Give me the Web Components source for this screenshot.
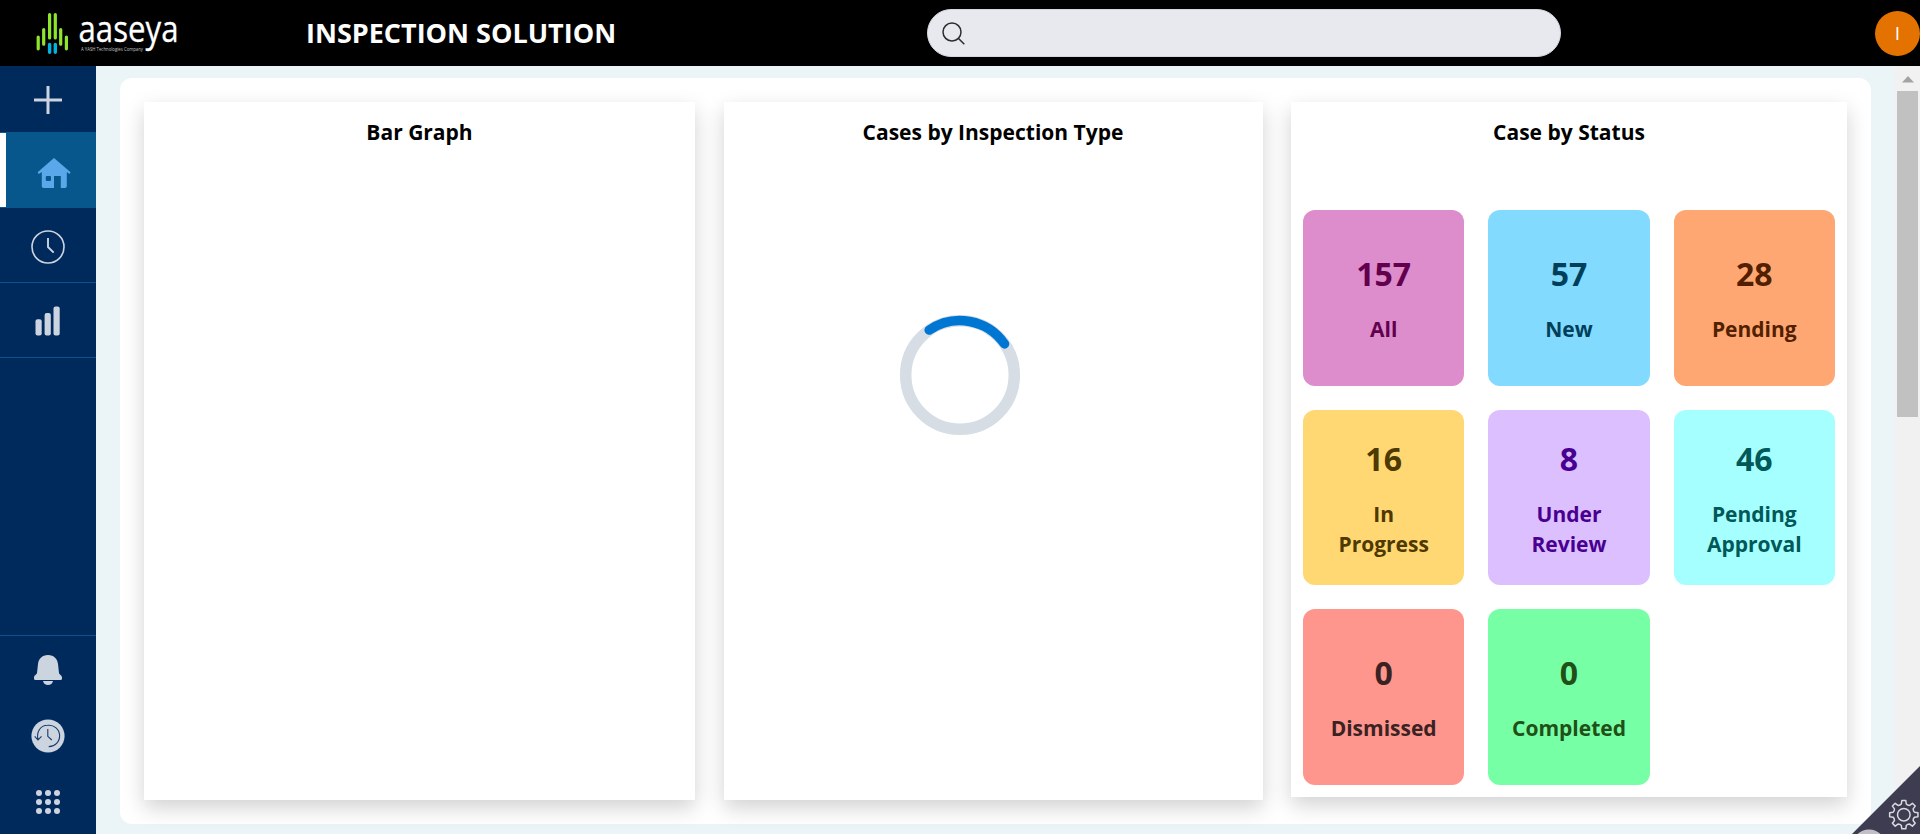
<!DOCTYPE html>
<html lang="en">
<head>
<meta charset="utf-8">
<title>Inspection Solution</title>
<style>
html,body{margin:0;height:100%;overflow:hidden;background:#ebf4f7;font-family:"Open Sans","Noto Sans",sans-serif}
</style>
</head>
<body>
<inspection-app></inspection-app>
<script>
const define=(name,html)=>customElements.define(name,class extends HTMLElement{
  constructor(){
    super();
    const t=document.createElement('template');
    t.innerHTML=html;
    this.attachShadow({mode:'open'}).append(t.content.cloneNode(true));
  }
});

define('brand-logo',`
<style>:host{display:block;width:192px;height:66px;flex:none}svg{display:block;overflow:visible}</style>
<svg width="192" height="66" viewBox="0 0 192 66">
  <g stroke="#8fe52c" stroke-width="3.2" stroke-linecap="round">
    <path d="M38.2 37V48.8M43.7 29.6V44.2M49.6 14.6V38M55.3 14.6V38M60.7 29.6V44.2M66.4 37V48.8"/>
  </g>
  <path d="M49.6 44.5V52.3M55.3 44.5V52.3" stroke="#00b4e0" stroke-width="3.4" stroke-linecap="round"/>
  <text x="78.500" y="41.8" font-family="Open Sans" font-size="36" fill="#fff" stroke="#fff" stroke-width=".3" textLength="100" lengthAdjust="spacingAndGlyphs">aaseya</text>
  <text x="81" y="51" font-family="Open Sans" font-size="5" fill="#c4c4c4" textLength="62" lengthAdjust="spacingAndGlyphs">A YASH Technologies Company</text>
</svg>`);

define('search-box',`
<style>:host{display:flex;align-items:center;box-sizing:border-box;width:634px;height:48px;border-radius:24px;background:#e8e9ef;border:1px solid #d5d7e0;padding-left:13px}</style>
<svg width="26" height="26" viewBox="0 0 26 26" fill="none" stroke="#2b2b33" stroke-width="1.5"><circle cx="11" cy="12" r="9"/><path d="M17.3 18.3 23.3 24.3"/></svg>`);

define('user-avatar',`
<style>:host{display:flex;align-items:center;justify-content:center;width:45px;height:45px;border-radius:50%;background:#e37200;color:#fff;font-size:19px;line-height:45px}</style>
<slot></slot>`);

define('app-header',`
<style>
:host{display:flex;align-items:center;height:66px;background:#000;color:#fff}
h1{margin:0 0 0 114px;width:621px;font-size:27px;line-height:36px;font-weight:700;white-space:nowrap}
user-avatar{margin-left:auto;margin-top:1px}
</style>
<brand-logo></brand-logo><h1>INSPECTION SOLUTION</h1><search-box></search-box><user-avatar>I</user-avatar>`);

define('nav-item',`
<style>
:host{display:flex;box-sizing:border-box;align-items:center;justify-content:center;height:75px;border-bottom:1px solid #08558b;color:#ccd4e0}
:host([plain]){height:66px;border:0}
:host([active]){height:76px;border:0;background:linear-gradient(#fff,#fff) 0 1px/6px 74px no-repeat #08578c;padding-left:12px;color:#5aa7ea}
</style><slot></slot>`);

define('side-nav',`
<style>
:host{display:flex;flex-direction:column;width:96px;background:#002a5c;flex:none}
svg{display:block;flex:none}
.bottom{margin-top:auto;border-top:1px solid #08558b}
</style>
<nav-item plain style="padding-top:2px"><svg width="28" height="28" viewBox="0 0 28 28" fill="none" stroke="currentColor" stroke-width="3"><path d="M14 0V28M0 14H28"/></svg></nav-item>
<nav-item active><svg style="margin-top:5px" width="34" height="32" viewBox="0 0 34 32"><path fill="currentColor" fill-rule="evenodd" d="M17 1 33.6 15.3 32.4 17 29.8 15V29.2Q29.8 31 28 31H23.8V19H17V31H6.7Q4.8 31 4.8 29.2V15L1.8 17 .6 15.3ZM9.8 19Q8.8 19 8.8 20V23Q8.8 24 9.8 24H13Q14 24 14 23V20Q14 19 13 19Z"/></svg></nav-item>
<nav-item style="padding-top:3px"><svg width="34" height="34" viewBox="0 0 34 34" fill="none" stroke="currentColor" stroke-width="1.6"><circle cx="17" cy="17" r="16"/><path d="M17 8V17L22.7 22.7" stroke-width="1.9"/></svg></nav-item>
<nav-item style="padding-top:2px"><svg width="26" height="30" viewBox="0 0 26 30" fill="currentColor"><rect x=".5" y="13.3" width="6.2" height="16.2" rx="2"/><rect x="9.6" y="7" width="6.2" height="22.5" rx="2"/><rect x="18.500" y=".6" width="6.2" height="28.9" rx="2"/></svg></nav-item>
<div class="bottom">
<nav-item plain><svg style="margin-top:1px" width="28" height="30" viewBox="0 0 28 30" fill="currentColor"><path d="M14 0C20 0 23.5 4 24 9L25 18C25.2 19.6 28 20 28 22.5V23.5Q28 25 26.5 25H1.5Q0 25 0 23.5V22.5C0 20 2.8 19.6 3 18L4 9C4.500 4 8 0 14 0ZM9 26H19C18.500 28.600 16.500 30 14 30S9.500 28.600 9 26Z"/></svg></nav-item>
<nav-item plain style="padding-top:2px"><svg width="34" height="34" viewBox="0 0 34 34" fill="none"><circle cx="17" cy="17" r="16.600" fill="currentColor"/><path d="M3.700 17.300 7 21 10.500 17.300M7 20.500C5.300 13.500 9 6.300 16.500 6.300A10.700 10.700 0 1 1 17.700 27.600M16.800 10V17.300L20.800 21" stroke="#153a69" stroke-width="1.100"/></svg></nav-item>
<nav-item plain style="padding-top:2px"><svg width="24" height="24" viewBox="0 0 24 24" fill="currentColor"><g id="r"><circle cx="3" cy="3" r="3"/><circle cx="12" cy="3" r="3"/><circle cx="21" cy="3" r="3"/></g><use href="#r" y="9"/><use href="#r" y="18"/></svg></nav-item>
</div>`);

define('dash-panel',`
<style>
:host{display:flex;flex-direction:column;box-sizing:border-box;background:#fff;box-shadow:0 8px 20px rgba(0,0,0,.18)}
h2{margin:15px 0 0;font-size:21px;line-height:30px;font-weight:700;color:#000;text-align:center}
</style><h2><slot name="title"></slot></h2><slot></slot>`);

define('status-tile',`
<style>
:host{display:flex;flex-direction:column;align-items:center;justify-content:center;border-radius:12px;text-align:center;font-weight:700;font-size:21px;line-height:30px;gap:18px}
b{font-size:32px;line-height:44px;font-weight:700}
.label{padding:0 20px}
</style><b><slot name="count"></slot></b><div class="label"><slot></slot></div>`);

define('status-grid',`
<style>
:host{display:grid;grid-template-columns:repeat(3,1fr);grid-template-rows:176px 175px 176px;column-gap:24px;row-gap:24px;margin:63px 12px 0}
</style><slot></slot>`);

define('loading-ring',`
<style>:host{display:block;position:absolute;left:899px;top:314px;width:122px;height:122px}svg{display:block}</style>
<svg width="122" height="122" viewBox="0 0 122 122" fill="none"><circle cx="61" cy="61" r="54.300" stroke="#d6dde5" stroke-width="11.500"/><path d="M30.200 16.100A54.300 54.300 0 0 1 105.500 29.900" stroke="#0076d3" stroke-width="9.500" stroke-linecap="round"/></svg>`);

define('scroll-track',`
<style>:host{display:flex;flex-direction:column;align-items:center;width:25px;background:#f1f1f1;flex:none}
i{display:block;width:21px;height:326px;background:#c1c1c1;margin-top:8.500px}
svg{display:block;margin-top:10px}</style>
<svg width="12" height="6.500" viewBox="0 0 12 6.500"><path d="M0 6.500 6 0 12 6.500Z" fill="#a3a3a3"/></svg><i></i>`);

define('corner-tools',`
<style>:host{display:block;position:absolute;right:0;bottom:0;width:68px;height:68px}svg{display:block}</style>
<svg width="68" height="68" viewBox="0 0 68 68"><path d="M68 0V68H0Z" fill="#3d3c50"/><circle cx="17" cy="80.500" r="17" fill="#c4bfc6"/>
<g transform="translate(51.800 48.700)" fill="none" stroke="#d9d9df" stroke-width="1.500" stroke-linejoin="round"><circle r="6.300"/><path id="gear"/></g></svg>`);

define('inspection-app',`
<style>
:host{display:flex;flex-direction:column;height:100vh;position:relative;overflow:hidden}
.body{display:flex;flex:1;min-height:0}
main{flex:1;padding:12px 24px 10px}
.sheet{display:grid;grid-template-columns:551px 539px 556px;column-gap:28.500px;box-sizing:border-box;height:746px;background:#fff;border-radius:12px;padding:24px}
dash-panel{height:698px}
dash-panel:last-child{height:695px}
</style>
<app-header></app-header>
<div class="body">
<side-nav></side-nav>
<main><div class="sheet">
<dash-panel><span slot="title">Bar Graph</span></dash-panel>
<dash-panel><span slot="title">Cases by Inspection Type</span></dash-panel>
<dash-panel><span slot="title">Case by Status</span>
<status-grid>
<status-tile style="background:#dd8dcb;color:#62004e"><span slot="count">157</span>All</status-tile>
<status-tile style="background:#82daff;color:#003f5a"><span slot="count">57</span>New</status-tile>
<status-tile style="background:#ffa772;color:#521f00"><span slot="count">28</span>Pending</status-tile>
<status-tile style="background:#ffd773;color:#4e3900"><span slot="count">16</span>In<br>Progress</status-tile>
<status-tile style="background:#dcbfff;color:#480090"><span slot="count">8</span>Under Review</status-tile>
<status-tile style="background:#a5ffff;color:#005858"><span slot="count">46</span>Pending Approval</status-tile>
<status-tile style="background:#ff968d;color:#3a2222"><span slot="count">0</span>Dismissed</status-tile>
<status-tile style="background:#77ffa5;color:#205018"><span slot="count">0</span>Completed</status-tile>
</status-grid></dash-panel>
</div></main>
<scroll-track></scroll-track>
</div>
<loading-ring></loading-ring>
<corner-tools></corner-tools>`);

// Eight rounded teeth around the settings hub.
const tools=document.querySelector('inspection-app').shadowRoot.querySelector('corner-tools').shadowRoot;
let d='';
for(let i=0;i<8;i++){
  const at=(r,deg)=>{const a=(deg+i*45-90)*Math.PI/180;return (r*Math.cos(a)).toFixed(2)+' '+(r*Math.sin(a)).toFixed(2)};
  d+=(i?'L':'M')+at(11,-13)+'L'+at(14.300,-8)+'L'+at(14.300,8)+'L'+at(11,13)+'Q'+at(10,22.500)+' '+at(11,32);
}
tools.querySelector('#gear').setAttribute('d',d+'Z');
</script>
</body>
</html>
